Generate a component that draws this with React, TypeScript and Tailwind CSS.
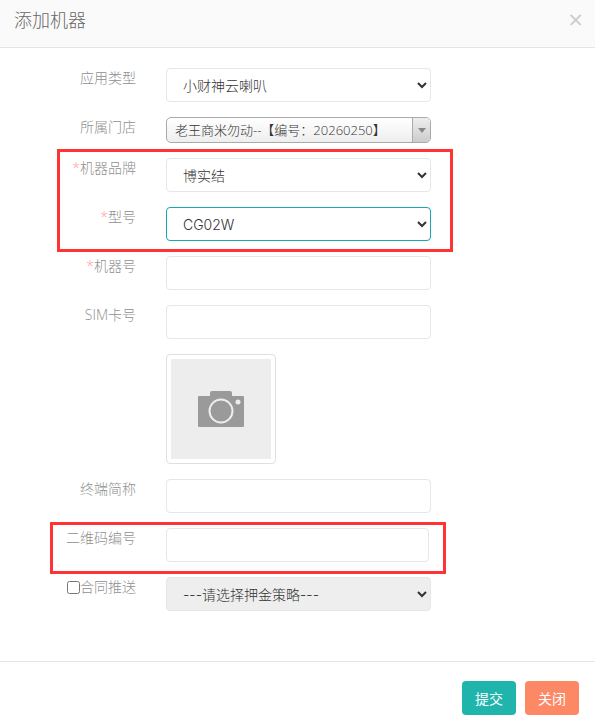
const font = { fontFamily: '"Open Sans", "Noto Sans CJK SC", sans-serif' };
const selectFont = { fontFamily: 'Inter, "Noto Sans CJK SC", sans-serif' };

function Row({ label, star, children }: { label?: React.ReactNode; star?: boolean; children: React.ReactNode }) {
  return (
    <div className="flex mb-[15px]">
      <label className="w-[136px] mr-[30px] text-right text-[14px] font-light leading-[20px] text-[#8f8f8f] flex justify-end items-start">
        {star && <span className="text-[#ff9a9a]">*</span>}
        {label}
      </label>
      {children}
    </div>
  );
}

const selectCls =
  "w-[265px] h-[34px] rounded-[4px] border border-[#e5e6e7] bg-white pl-[12px] pr-[8px] text-[14px] font-light text-[#333] outline-none";
const inputCls = "block w-[265px] h-[34px] rounded-[4px] border border-[#e5e6e7] bg-white";

function Camera() {
  return (
    <svg width="48" height="38" viewBox="0 0 48 38">
      <path
        d="M13 6V3Q13 1 15 1H33Q35 1 35 3V6H46Q47 6 47 7V36Q47 37 46 37H2Q1 37 1 36V7Q1 6 2 6Z"
        fill="#9a9a9a"
      />
      <circle cx="24" cy="21" r="11.500" fill="none" stroke="#ededed" strokeWidth="2" />
      <circle cx="41" cy="12" r="2.500" fill="#ededed" />
    </svg>
  );
}

export default function App() {
  return (
    <div className="relative w-[595px] h-[727px] bg-white overflow-hidden" style={font}>
      <div className="h-[48px] bg-[#fafafa] border-b border-[#e5e5e5] flex items-center justify-between pl-[14px] pr-[12px] pb-[6px]">
        <span className="text-[18px] text-[#666] font-light">添加机器</span>
        <span className="text-[26px] font-normal text-[#cccccc] leading-none -mt-[4px]">×</span>
      </div>

      <div className="pt-[20px] h-[613px]">
        <Row label="应用类型">
          <select className={selectCls} style={selectFont} defaultValue="a">
            <option value="a">小财神云喇叭</option>
          </select>
        </Row>

        <Row label="所属门店">
          <div className="flex w-[265px] h-[26px] rounded-[5px] border border-[#aaa] bg-gradient-to-b from-white to-[#eeeeee] overflow-hidden">
            <span className="flex-1 pl-[8px] text-[13px] font-light leading-[24px] text-[#333] whitespace-nowrap">
              老王商米勿动--【编号：20260250】
            </span>
            <span className="w-[18px] border-l border-[#aaa] bg-gradient-to-b from-[#eeeeee] to-[#cccccc] flex items-center justify-center">
              <span className="block w-0 h-0 border-x-[4px] border-x-transparent border-t-[5px] border-t-[#888]" />
            </span>
          </div>
        </Row>

        <Row label="机器品牌" star>
          <select className={selectCls} style={selectFont} defaultValue="a">
            <option value="a">博实结</option>
          </select>
        </Row>

        <Row label="型号" star>
          <select className={`${selectCls} !border-[#14a9b0]`} style={selectFont} defaultValue="a">
            <option value="a">CG02W</option>
          </select>
        </Row>

        <Row label="机器号" star>
          <input className={inputCls} />
        </Row>

        <Row label="SIM卡号">
          <input className={inputCls} />
        </Row>

        <Row>
          <div className="w-[110px] h-[110px] p-[4px] rounded-[4px] border border-[#e0e0e0] bg-white">
            <div className="w-[100px] h-[100px] bg-[#ededed] flex items-center justify-center">
              <Camera />
            </div>
          </div>
        </Row>

        <Row label="终端简称">
          <input className={inputCls} />
        </Row>

        <Row label="二维码编号">
          <input className={`${inputCls} !w-[263px]`} />
        </Row>

        <Row
          label={
            <span className="flex items-center">
              <input type="checkbox" className="w-[13px] h-[13px] m-0 mt-[1px]" />
              合同推送
            </span>
          }
        >
          <select className={`${selectCls} !bg-[#eeeeee]`} style={selectFont} defaultValue="a" disabled>
            <option value="a">---请选择押金策略---</option>
          </select>
        </Row>
      </div>

      <div className="border-t border-[#e5e5e5] flex justify-end gap-[9px] pt-[19px] pr-[16px]">
        <button className="w-[54px] h-[34px] rounded-[4px] bg-[#1fb5ad] text-white text-[14px]">提交</button>
        <button className="w-[54px] h-[34px] rounded-[4px] bg-[#fc8865] text-white text-[14px]">关闭</button>
      </div>

      <div className="absolute left-[57px] top-[149px] w-[396px] h-[103px] border-[3px] border-[#ff3333] pointer-events-none" />
      <div className="absolute left-[50px] top-[522px] w-[396px] h-[52px] border-[3px] border-[#ff3333] pointer-events-none" />
    </div>
  );
}
